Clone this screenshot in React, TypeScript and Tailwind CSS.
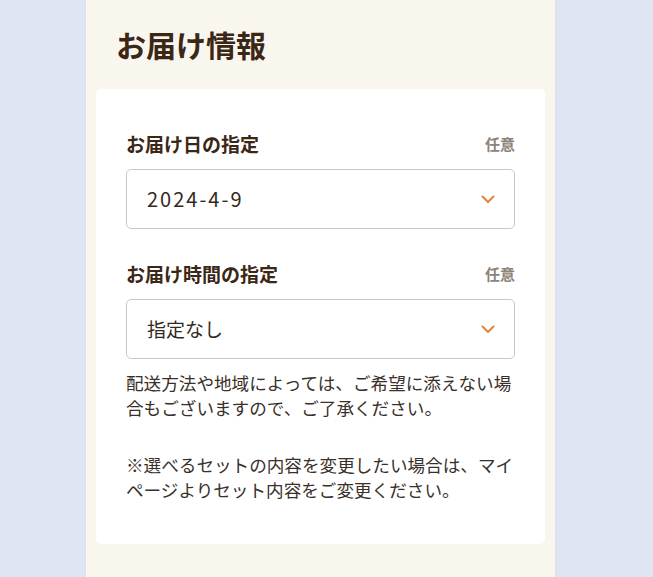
const font = "font-['Noto_Sans_CJK_JP','Noto_Sans',sans-serif]";

function Chevron() {
  return (
    <svg width="14" height="9" viewBox="0 0 14 9" fill="none" className="shrink-0">
      <path d="M1.5 1.5L7 7l5.5-5.5" stroke="#e0843a" strokeWidth="2" strokeLinecap="round" strokeLinejoin="round" />
    </svg>
  );
}

function SelectField({ label, value, first, numeric }: { label: string; value: string; first?: boolean; numeric?: boolean }) {
  return (
    <div className={first ? "" : "mt-[31px]"}>
      <div className="flex h-[28px] items-center justify-between">
        <span className="text-[19px] font-bold text-[#3b2716]">{label}</span>
        <span className="text-[15px] font-bold text-[#8c8379]">任意</span>
      </div>
      <div className="mt-[11px] flex h-[60px] items-center justify-between rounded-[5px] border border-[#c9c9c9] bg-white pl-[20px] pr-[19px]">
        <span className={numeric ? "text-[20px] tracking-[0.1em] text-[#33291f]" : "text-[19px] text-[#33291f]"}>{value}</span>
        <Chevron />
      </div>
    </div>
  );
}

export default function App() {
  return (
    <div className={`min-h-[577px] bg-[#dfe5f3] ${font}`}>
      <div className="ml-[86px] min-h-[577px] w-[469px] bg-[#f9f6ee] px-[10px] pt-[23px] shadow-[0_0_3px_rgba(0,0,0,0.06)]">
        <h1 className="h-[42px] pl-[20px] text-[30px] font-bold leading-[42px] text-[#3b2716]">お届け情報</h1>
        <section className="mt-[24px] rounded-[5px] bg-white px-[30px] pb-[42px] pt-[41px]">
          <SelectField first numeric label="お届け日の指定" value="2024-4-9" />
          <SelectField label="お届け時間の指定" value="指定なし" />
          <p className="mt-[11px] text-[17.6px] leading-[25px] text-[#3a3029]">
            配送方法や地域によっては、ご希望に添えない場合もございますので、ご了承ください。
          </p>
          <p className="mt-[32px] text-[17.6px] leading-[25px] text-[#3a3029]">
            ※選べるセットの内容を変更したい場合は、マイページよりセット内容をご変更ください。
          </p>
        </section>
      </div>
    </div>
  );
}
